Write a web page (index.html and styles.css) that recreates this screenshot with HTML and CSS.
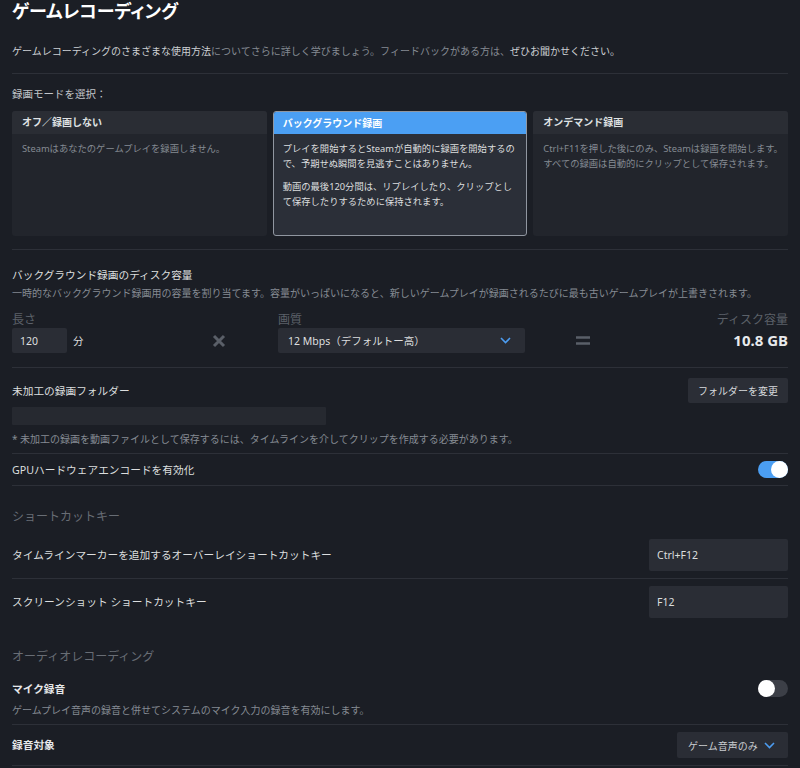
FILE: index.html
```html
<!DOCTYPE html>
<html lang="ja">
<head>
<meta charset="utf-8">
<title>ゲームレコーディング</title>
<link rel="stylesheet" href="styles.css">
</head>
<body>
<main class="page">
  <h1 class="title">ゲームレコーディング</h1>
  <p class="intro"><span class="hl">ゲームレコーディングのさまざまな使用方法</span>についてさらに詳しく学びましょう。フィードバックがある方は、<span class="hl">ぜひお聞かせください。</span></p>
  <div class="sep sep-intro"></div>

  <div class="mode-label">録画モードを選択：</div>
  <div class="modes">
    <div class="mode">
      <div class="mode-head">オフ／録画しない</div>
      <div class="mode-body">
        <p>Steamはあなたのゲームプレイを録画しません。</p>
      </div>
    </div>
    <div class="mode selected">
      <div class="mode-head">バックグラウンド録画</div>
      <div class="mode-body">
        <p>プレイを開始するとSteamが自動的に録画を開始するので、予期せぬ瞬間を見逃すことはありません。</p>
        <p>動画の最後120分間は、リプレイしたり、クリップとして保存したりするために保持されます。</p>
      </div>
    </div>
    <div class="mode mode-wide">
      <div class="mode-head">オンデマンド録画</div>
      <div class="mode-body">
        <p>Ctrl+F11を押した後にのみ、Steamは録画を開始します。すべての録画は自動的にクリップとして保存されます。</p>
      </div>
    </div>
  </div>
  <div class="sep sep-modes"></div>

  <section class="disk">
    <div class="label">バックグラウンド録画のディスク容量</div>
    <div class="desc desc-disk">一時的なバックグラウンド録画用の容量を割り当てます。容量がいっぱいになると、新しいゲームプレイが録画されるたびに最も古いゲームプレイが上書きされます。</div>
    <div class="calc">
      <div class="calc-col len-col">
        <div class="calc-label">長さ</div>
        <div class="len-row">
          <div class="field len-field">120</div>
          <span class="unit">分</span>
        </div>
      </div>
      <div class="op op-x">
        <svg width="14" height="14" viewBox="0 0 14 14"><path d="M2 2 L12 12 M12 2 L2 12" stroke="#5a5f68" stroke-width="3" stroke-linecap="butt" fill="none"/></svg>
      </div>
      <div class="calc-col quality-col">
        <div class="calc-label">画質</div>
        <div class="field select-field">
          <span>12 Mbps（デフォルトー高）</span>
          <svg class="chev" width="11" height="7" viewBox="0 0 11 7"><path d="M1 1 L5.5 5.5 L10 1" stroke="#4c9cf0" stroke-width="1.6" fill="none"/></svg>
        </div>
      </div>
      <div class="op op-eq">
        <svg width="14" height="9" viewBox="0 0 14 9"><path d="M0 1.5 H14 M0 7.5 H14" stroke="#5a5f68" stroke-width="2.4" fill="none"/></svg>
      </div>
      <div class="calc-col size-col">
        <div class="calc-label">ディスク容量</div>
        <div class="size-value">10.8 GB</div>
      </div>
    </div>
  </section>
  <div class="sep sep-disk"></div>

  <section class="folder">
    <div class="row-between folder-row">
      <div class="label">未加工の録画フォルダー</div>
      <button class="btn">フォルダーを変更</button>
    </div>
    <div class="path-bar"></div>
    <div class="desc note">* 未加工の録画を動画ファイルとして保存するには、タイムラインを介してクリップを作成する必要があります。</div>
  </section>
  <div class="sep sep-note"></div>

  <div class="row-between gpu-row">
    <div class="label">GPUハードウェアエンコードを有効化</div>
    <div class="toggle on"><span class="knob"></span></div>
  </div>
  <div class="sep"></div>

  <h2 class="section-head head-shortcut">ショートカットキー</h2>
  <div class="row-between key-row bordered">
    <div class="label">タイムラインマーカーを追加するオーバーレイショートカットキー</div>
    <div class="key-field">Ctrl+F12</div>
  </div>
  <div class="row-between key-row">
    <div class="label">スクリーンショット ショートカットキー</div>
    <div class="key-field">F12</div>
  </div>

  <h2 class="section-head head-audio">オーディオレコーディング</h2>
  <div class="mic bordered">
    <div class="row-between">
      <div class="label strong">マイク録音</div>
      <div class="toggle"><span class="knob"></span></div>
    </div>
    <div class="desc mic-desc">ゲームプレイ音声の録音と併せてシステムのマイク入力の録音を有効にします。</div>
  </div>
  <div class="row-between target-row bordered">
    <div class="label strong">録音対象</div>
    <div class="dropdown">
      <span>ゲーム音声のみ</span>
      <svg class="chev" width="11" height="7" viewBox="0 0 11 7"><path d="M1 1 L5.5 5.5 L10 1" stroke="#4c9cf0" stroke-width="1.6" fill="none"/></svg>
    </div>
  </div>
</main>
</body>
</html>
```

FILE: styles.css
```css
* { box-sizing: border-box; }
html, body { margin: 0; padding: 0; background: #1b1e25; }
body {
  font-family: "Noto Sans", "Noto Sans CJK JP", sans-serif;
  color: #dcdedf;
}
.page { width: 800px; padding: 0 12px; }
p { margin: 0; }

.title {
  margin: 0;
  font-size: 18px;
  line-height: 23px;
  font-weight: 700;
  color: #ffffff;
  font-feature-settings: "palt";
}
.intro {
  margin-top: 20px;
  font-size: 10px;
  line-height: 16px;
  color: #858b93;
}
.intro .hl { color: #cdd0d4; }

.sep { height: 1px; background: #2d3038; }
.sep-intro { margin-top: 14px; }

.mode-label {
  margin-top: 12px;
  font-size: 10.5px;
  line-height: 16px;
  color: #c2c5c9;
}
.modes {
  margin-top: 9px;
  display: grid;
  grid-template-columns: repeat(3, 1fr);
  gap: 6px;
  height: 125px;
}
.mode {
  background: #22252c;
  border-radius: 3px;
  overflow: hidden;
  display: flex;
  flex-direction: column;
}
.mode-head {
  height: 23px;
  line-height: 23px;
  padding: 0 10px;
  background: #2a2d34;
  font-size: 10px;
  font-weight: 700;
  color: #dfe1e3;
}
.mode-body {
  padding: 7px 10px 0;
  font-size: 9.3px;
  line-height: 15px;
  color: #858b93;
}
.mode-wide .mode-body { padding-right: 0; }
.mode-body p + p { margin-top: 8px; }
.mode.selected {
  background: #2b2f38;
  border: 1px solid #9096a0;
}
.mode.selected .mode-head {
  height: 22px;
  line-height: 22px;
  padding: 0 9px;
  background: #4b9ff3;
  color: #ffffff;
}
.mode.selected .mode-body { padding: 7px 9px 0; color: #dcdedf; }
.sep-modes { margin-top: 13px; }

.label { font-size: 10.7px; line-height: 16px; color: #dcdedf; }
.label.strong { font-weight: 700; color: #e6e8ea; }
.desc { font-size: 10px; line-height: 16px; color: #858b93; }

.disk .label { margin-top: 17px; }
.desc-disk { margin-top: 2px; }
.calc { margin-top: 11px; display: flex; align-items: flex-end; }
.calc-col { display: flex; flex-direction: column; }
.calc-label { font-size: 12px; line-height: 16px; color: #5c6169; }
.len-col { width: 178px; }
.len-row { display: flex; align-items: center; gap: 6px; }
.field {
  height: 25px;
  background: #2a2d35;
  border-radius: 2px;
  font-size: 10.5px;
  color: #dcdedf;
  display: flex;
  align-items: center;
}
.len-field { width: 55px; padding-left: 8px; }
.unit { font-size: 10.5px; color: #dcdedf; }
.op { height: 25px; display: flex; align-items: center; justify-content: center; }
.op-x { width: 58px; margin-right: 30px; }
.quality-col { width: 247px; }
.select-field { padding: 0 14px 0 10px; justify-content: space-between; }
.op-eq { width: 116px; }
.size-col { flex: 1; align-items: flex-end; }
.size-value {
  height: 25px;
  line-height: 25px;
  font-size: 15px;
  font-weight: 700;
  color: #e8eaec;
}
.sep-disk { margin-top: 14px; }

.row-between { display: flex; justify-content: space-between; align-items: center; }
.folder-row { margin-top: 10px; height: 25px; }
.btn {
  width: 100px;
  height: 25px;
  border: none;
  border-radius: 2px;
  background: #2b2e36;
  color: #d6d9dc;
  font-family: inherit;
  font-size: 10px;
  padding: 0;
}
.path-bar {
  margin-top: 4px;
  width: 314px;
  height: 18px;
  background: #262930;
  border-radius: 1px;
}
.note { margin-top: 6px; }
.sep-note { margin-top: 6px; }

.gpu-row { height: 31px; }
.toggle {
  width: 30px;
  height: 17px;
  border-radius: 9px;
  background: #3c3f47;
  position: relative;
  flex: none;
}
.toggle .knob {
  position: absolute;
  top: 0;
  left: 0;
  width: 17px;
  height: 17px;
  border-radius: 50%;
  background: #ffffff;
}
.toggle.on { background: #4b9ef2; }
.toggle.on .knob { left: 13px; }

.section-head {
  margin: 0;
  font-size: 12px;
  line-height: 16px;
  font-weight: 400;
  color: #686d75;
}
.head-shortcut { margin-top: 23px; }
.key-row { padding: 7px 0; }
.head-shortcut + .key-row { margin-top: 7px; }
.bordered { border-bottom: 1px solid #2d3038; }
.key-field {
  width: 139px;
  height: 32px;
  background: #2a2d35;
  border-radius: 2px;
  padding-left: 8px;
  display: flex;
  align-items: center;
  font-size: 10.5px;
  color: #dcdedf;
}

.head-audio { margin-top: 24px; }
.mic { margin-top: 15px; padding-bottom: 6px; }
.mic-desc { margin-top: 5px; }
.target-row { padding: 7px 0; }
.dropdown {
  width: 111px;
  height: 26px;
  background: #2a2d35;
  border-radius: 2px;
  padding: 0 13px 0 11px;
  display: flex;
  align-items: center;
  justify-content: space-between;
  font-size: 10px;
  color: #c9ccd0;
}
```
